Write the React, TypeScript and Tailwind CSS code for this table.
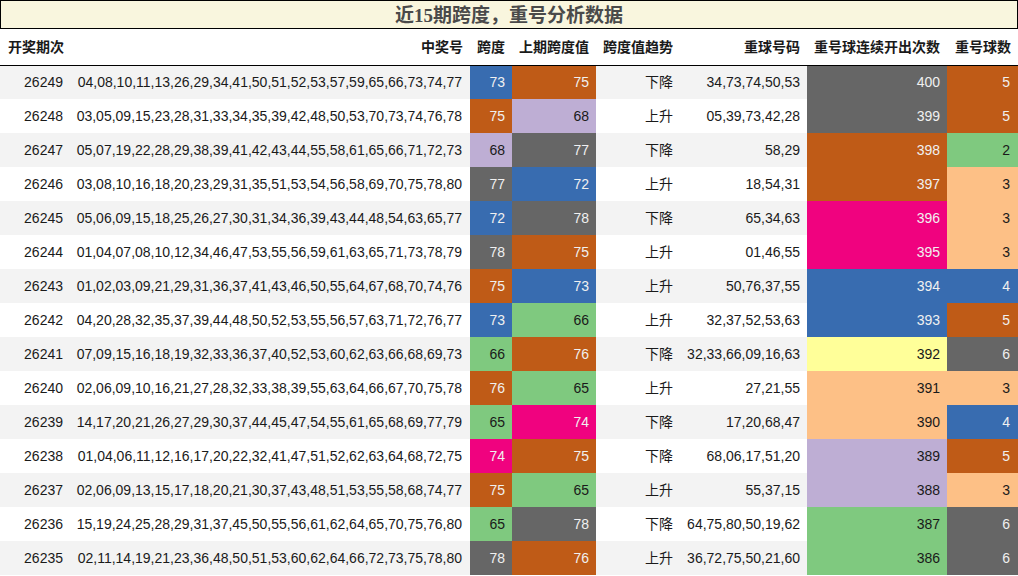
// @ts-nocheck
const COLORS = {
  blue: "bg-[#386cb0] text-[#f0f0f0]",
  brown: "bg-[#bf5b17] text-[#f0f0f0]",
  gray: "bg-[#666666] text-[#f0f0f0]",
  pink: "bg-[#f0027f] text-[#f0f0f0]",
  green: "bg-[#7fc97f] text-[#1a1a1a]",
  lav: "bg-[#beaed4] text-[#1a1a1a]",
  peach: "bg-[#fdc086] text-[#1a1a1a]",
  yellow: "bg-[#ffff99] text-[#1a1a1a]",
};

const spanColor = {
  65: "green", 66: "green", 68: "lav", 72: "blue", 73: "blue",
  74: "pink", 75: "brown", 76: "brown", 77: "gray", 78: "gray",
};

// [期次, 中奖号, 跨度, 上期跨度, 趋势, 重球号码, 连续次数, 次数色, 重号球数, 球数色]
const rows = [
  ["26249", "04,08,10,11,13,26,29,34,41,50,51,52,53,57,59,65,66,73,74,77", 73, 75, "下降", "34,73,74,50,53", 400, "gray", 5, "brown"],
  ["26248", "03,05,09,15,23,28,31,33,34,35,39,42,48,50,53,70,73,74,76,78", 75, 68, "上升", "05,39,73,42,28", 399, "gray", 5, "brown"],
  ["26247", "05,07,19,22,28,29,38,39,41,42,43,44,55,58,61,65,66,71,72,73", 68, 77, "下降", "58,29", 398, "brown", 2, "green"],
  ["26246", "03,08,10,16,18,20,23,29,31,35,51,53,54,56,58,69,70,75,78,80", 77, 72, "上升", "18,54,31", 397, "brown", 3, "peach"],
  ["26245", "05,06,09,15,18,25,26,27,30,31,34,36,39,43,44,48,54,63,65,77", 72, 78, "下降", "65,34,63", 396, "pink", 3, "peach"],
  ["26244", "01,04,07,08,10,12,34,46,47,53,55,56,59,61,63,65,71,73,78,79", 78, 75, "上升", "01,46,55", 395, "pink", 3, "peach"],
  ["26243", "01,02,03,09,21,29,31,36,37,41,43,46,50,55,64,67,68,70,74,76", 75, 73, "上升", "50,76,37,55", 394, "blue", 4, "blue"],
  ["26242", "04,20,28,32,35,37,39,44,48,50,52,53,55,56,57,63,71,72,76,77", 73, 66, "上升", "32,37,52,53,63", 393, "blue", 5, "brown"],
  ["26241", "07,09,15,16,18,19,32,33,36,37,40,52,53,60,62,63,66,68,69,73", 66, 76, "下降", "32,33,66,09,16,63", 392, "yellow", 6, "gray"],
  ["26240", "02,06,09,10,16,21,27,28,32,33,38,39,55,63,64,66,67,70,75,78", 76, 65, "上升", "27,21,55", 391, "peach", 3, "peach"],
  ["26239", "14,17,20,21,26,27,29,30,37,44,45,47,54,55,61,65,68,69,77,79", 65, 74, "下降", "17,20,68,47", 390, "peach", 4, "blue"],
  ["26238", "01,04,06,11,12,16,17,20,22,32,41,47,51,52,62,63,64,68,72,75", 74, 75, "下降", "68,06,17,51,20", 389, "lav", 5, "brown"],
  ["26237", "02,06,09,13,15,17,18,20,21,30,37,43,48,51,53,55,58,68,74,77", 75, 65, "上升", "55,37,15", 388, "lav", 3, "peach"],
  ["26236", "15,19,24,25,28,29,31,37,45,50,55,56,61,62,64,65,70,75,76,80", 65, 78, "下降", "64,75,80,50,19,62", 387, "green", 6, "gray"],
  ["26235", "02,11,14,19,21,23,36,48,50,51,53,60,62,64,66,72,73,75,78,80", 78, 76, "上升", "36,72,75,50,21,60", 386, "green", 6, "gray"],
];

const headers = ["开奖期次", "中奖号", "跨度", "上期跨度值", "跨度值趋势", "重球号码", "重号球连续开出次数", "重号球数"];
const widths = ["w-[70px]", "w-[400px]", "w-[42px]", "w-[84px]", "w-[84px]", "w-[127px]", "w-[140px]", "w-[71px]"];

export default function App() {
  return (
    <div className="w-[1018px] h-[576px] overflow-hidden bg-white font-['Liberation_Sans','Noto_Sans_CJK_SC',sans-serif] text-[14px] text-[#1a1a1a]">
      {/* 标题 */}
      <div className="h-[29px] border border-black bg-[#f9f6de] flex items-center justify-center pt-[1px]">
        <h1 className="font-['Liberation_Serif','Noto_Sans_CJK_SC',serif] font-bold text-[19px] leading-none text-[#4a4a4a]">
          近15期跨度，重号分析数据
        </h1>
      </div>

      <table className="w-[1018px] table-fixed border-collapse">
        <colgroup>
          {widths.map((w, i) => (
            <col key={i} className={w} />
          ))}
        </colgroup>
        <thead>
          <tr className="h-[36px] border-b border-black">
            {headers.map((h, i) => (
              <th
                key={h}
                className={i === 0 ? "text-left pl-2 pt-[1px] font-bold whitespace-nowrap" : "text-right pr-[7px] pt-[1px] font-bold whitespace-nowrap"}
              >
                {h}
              </th>
            ))}
          </tr>
        </thead>
        <tbody>
          {rows.map((r, idx) => (
            <tr key={r[0]} className={idx % 2 === 0 ? "h-[34px] bg-[#f3f3f3]" : "h-[34px] bg-white"}>
              <td className="text-right pr-[7px]">{r[0]}</td>
              <td className="text-right pr-[8px] whitespace-nowrap">{r[1]}</td>
              <td className={"text-right pr-[7px] " + COLORS[spanColor[r[2]]]}>{r[2]}</td>
              <td className={"text-right pr-[7px] " + COLORS[spanColor[r[3]]]}>{r[3]}</td>
              <td className="text-right pr-[7px]">{r[4]}</td>
              <td className="text-right pr-[7px] whitespace-nowrap">{r[5]}</td>
              <td className={"text-right pr-[7px] " + COLORS[r[7]]}>{r[6]}</td>
              <td className={"text-right pr-[8px] " + COLORS[r[9]]}>{r[8]}</td>
            </tr>
          ))}
        </tbody>
      </table>
    </div>
  );
}
